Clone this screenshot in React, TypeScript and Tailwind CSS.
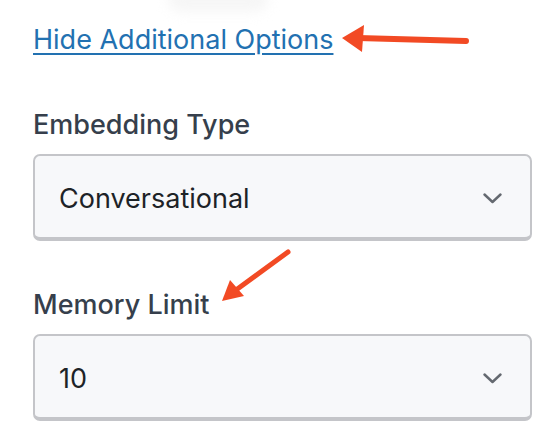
const font = { fontFamily: "Inter, 'Noto Sans', sans-serif" };

function SelectBox({ value }: { value: string }) {
  return (
    <div className="flex h-[87px] w-[499px] items-center justify-between rounded-[7px] border-2 border-b-4 border-[#c4c5c9] bg-[#f7f8fa] pl-[24px] pr-[28px]">
      <span className="pt-[5px] text-[27px] text-[#1d2327]">{value}</span>
      <svg width="19" height="11" viewBox="0 0 19 11" fill="none" className="mt-[4px]">
        <path
          d="M1.5 1.5 L9.5 9 L17.5 1.5"
          stroke="#646970"
          strokeWidth="2.4"
          strokeLinecap="round"
          strokeLinejoin="round"
        />
      </svg>
    </div>
  );
}

export default function App() {
  return (
    <main
      className="relative h-[446px] w-[556px] overflow-hidden bg-white pl-[33px]"
      style={font}
    >
      {/* faint shadow at top edge */}
      <div className="pointer-events-none absolute left-[168px] top-[-14px] h-[26px] w-[100px] rounded-full bg-[#f6f6f6] blur-[6px]" />

      <div className="relative pt-[24px]">
        <a
          href="#"
          className="text-[27px] leading-[32px] text-[#2271b1] underline decoration-[2px] underline-offset-[4px]"
        >
          Hide Additional Options
        </a>
      </div>

      <div className="mt-[53px] flex flex-col">
        <label className="text-[27px] font-medium leading-[32px] text-[#363f4c]">
          Embedding Type
        </label>
        <div className="mt-[13px]">
          <SelectBox value="Conversational" />
        </div>

        <label className="mt-[48px] text-[27px] font-medium leading-[32px] text-[#363f4c]">
          Memory Limit
        </label>
        <div className="mt-[13px]">
          <SelectBox value="10" />
        </div>
      </div>

      {/* annotation arrows */}
      <svg
        className="pointer-events-none absolute left-0 top-0"
        width="556"
        height="446"
        viewBox="0 0 556 446"
      >
        <line x1="466" y1="41" x2="358" y2="38" stroke="#f24a24" strokeWidth="6" strokeLinecap="round" />
        <polygon points="342,38 364,25 362,52" fill="#f24a24" />
        <line x1="288" y1="252" x2="236" y2="290" stroke="#f24a24" strokeWidth="5" strokeLinecap="round" />
        <polygon points="222,301 230,280 244,296" fill="#f24a24" />
      </svg>
    </main>
  );
}
